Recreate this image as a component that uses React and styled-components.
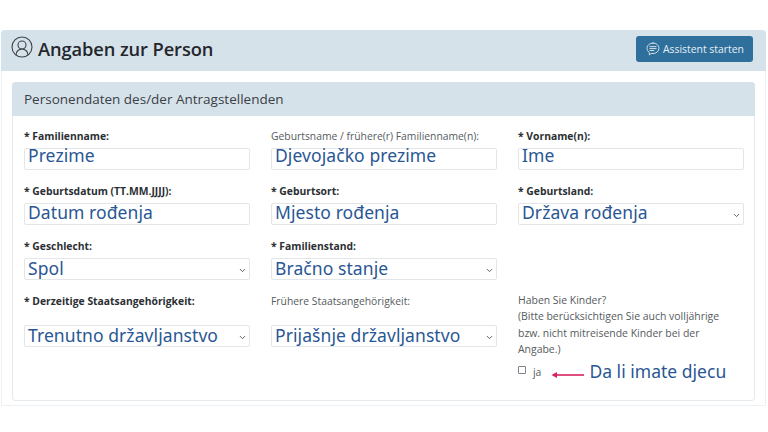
import React from 'react'
import styled, { createGlobalStyle } from 'styled-components'
import { CircleUserRound, ChevronDown } from 'lucide-react'

const GlobalStyle = createGlobalStyle`
    html, body {
        margin: 0;
        padding: 0;
        background: #fff;
    }
    body {
        font-family: 'Open Sans', 'Liberation Sans', sans-serif;
        color: #212529;
    }
`

const Page = styled.div`
    width: 768px;
    height: 432px;
    padding: 30px 1px 0;
    box-sizing: border-box;
    overflow: hidden;
`
const Panel = styled.section`
    width: 765px;
    height: 376px;
    box-sizing: border-box;
    border: 1px solid #eef1f4;
    border-top: 0;
    border-radius: 4px 4px 0 0;
`
const PanelHead = styled.header`
    height: 41px;
    box-sizing: border-box;
    margin: 0 -1px;
    padding: 6px 13px 0 11px;
    background: #d6e2ea;
    border-radius: 4px 4px 0 0;
    display: flex;
    justify-content: space-between;
    align-items: flex-start;
`
const Title = styled.h1`
    margin: 0;
    display: flex;
    align-items: flex-start;
    gap: 4px;
    font-size: 18.3px;
    letter-spacing: -0.1px;
    line-height: 26px;
    font-weight: 600;
    color: #23272b;
    svg {
        margin: -1px 0 0 -2px;
        color: #3c4247;
    }
`
const StartButton = styled.button`
    width: 117px;
    height: 26px;
    padding: 0 0 0 10px;
    border: 0;
    border-radius: 3px;
    background: #2f6f9b;
    color: #e6eff5;
    font-family: inherit;
    font-size: 10.4px;
    display: flex;
    align-items: center;
    gap: 3px;
`
const InnerCard = styled.div`
    margin: 11px 10px 0 10px;
    height: 319px;
    box-sizing: border-box;
    border: 1px solid #e6e9ec;
    border-top: 0;
    border-radius: 4px;
`
const InnerHead = styled.h2`
    margin: 0 -1px;
    height: 34px;
    box-sizing: border-box;
    padding: 0 12px;
    background: #d6e2ea;
    border-radius: 4px 4px 0 0;
    font-size: 13.5px;
    font-weight: 400;
    line-height: 35px;
    color: #3a4046;
`
const FormGrid = styled.div`
    display: grid;
    grid-template-columns: repeat(3, 226px);
    column-gap: 21px;
    row-gap: 13px;
    padding: 12px 11px 0;
`
const Field = styled.div`
    display: flex;
    flex-direction: column;
`
const Label = styled.label`
    font-size: 10.35px;
    line-height: 16px;
    height: ${p => (p.$tall ? '32px' : '20px')};
    font-weight: ${p => (p.$required ? 700 : 400)};
    color: ${p => (p.$required ? '#2b2f33' : '#555b60')};
`
const Control = styled.div`
    height: 22px;
    box-sizing: border-box;
    border: 1px solid #e3e6e9;
    border-radius: 2px;
    padding: 0 3px ${p => (p.$lift || 0) + 2}px;
    display: flex;
    align-items: center;
    justify-content: space-between;
    font-family: 'Noto Sans', 'Inter', sans-serif;
    font-size: 17.5px;
    letter-spacing: 0.08px;
    line-height: 20px;
    color: #2a5794;
    background: #fff;
    svg {
        color: #50565b;
        margin: ${p => (p.$lift || 0) + 4}px -1px 0 0;
        flex: none;
    }
`
const Note = styled.div`
    font-size: 10.45px;
    line-height: 16.4px;
    margin-top: -1px;
    color: #555b60;
`
const AnswerRow = styled.div`
    display: flex;
    align-items: center;
    margin-top: 3px;
    height: 24px;
`
const Box = styled.span`
    width: 6px;
    height: 6px;
    border: 1px solid #7d8388;
    border-radius: 1px;
    margin-bottom: 5px;
`
const BoxText = styled.span`
    font-size: 10.4px;
    margin: 0 0 2px 7px;
    color: #555b60;
`
const Arrow = styled.svg`
    margin: 4px 0 0 10px;
    flex: none;
    width: 34px;
    height: 8px;
`
const Hint = styled.span`
    margin: -4px 0 0 4px;
    font-family: 'Noto Sans', 'Inter', sans-serif;
    font-size: 17.5px;
    letter-spacing: 0.02px;
    color: #2a5794;
`

const ChatIcon = () => (
    <svg width="14" height="14" viewBox="0 0 16 16" fill="none" stroke="currentColor" strokeWidth="1" strokeLinecap="round">
        <path d="M8 1.2c3.8 0 6.8 2.7 6.8 6S11.8 13.2 8 13.2c-.8 0-1.5-.1-2.2-.3L3.900 15l-.2-3.100C2.100 10.800 1.200 9.100 1.200 7.200c0-3.300 3-6 6.800-6z" />
        <path d="M4.500 5.300h7M4.500 7.500h7M4.500 9.700h4.500" />
    </svg>
)

const Select = ({ children, lift }) => (
    <Control $lift={lift}>
        {children}
        <ChevronDown size={9} strokeWidth={2.5} />
    </Control>
)

const App = () => {
    return (
        <Page>
            <GlobalStyle />
            <Panel>
                <PanelHead>
                    <Title>
                        <CircleUserRound size={24} strokeWidth={1.1} />
                        Angaben zur Person
                    </Title>
                    <StartButton type="button">
                        <ChatIcon />
                        Assistent starten
                    </StartButton>
                </PanelHead>
                <InnerCard>
                    <InnerHead>Personendaten des/der Antragstellenden</InnerHead>
                    <FormGrid>
                        <Field>
                            <Label $required>* Familienname:</Label>
                            <Control $lift={6}>Prezime</Control>
                        </Field>
                        <Field>
                            <Label>Geburtsname / frühere(r) Familienname(n):</Label>
                            <Control $lift={6}>Djevojačko prezime</Control>
                        </Field>
                        <Field>
                            <Label $required>* Vorname(n):</Label>
                            <Control $lift={6}>Ime</Control>
                        </Field>
                        <Field>
                            <Label $required>* Geburtsdatum (TT.MM.JJJJ):</Label>
                            <Control $lift={3}>Datum rođenja</Control>
                        </Field>
                        <Field>
                            <Label $required>* Geburtsort:</Label>
                            <Control $lift={3}>Mjesto rođenja</Control>
                        </Field>
                        <Field>
                            <Label $required>* Geburtsland:</Label>
                            <Select lift={3}>Država rođenja</Select>
                        </Field>
                        <Field>
                            <Label $required>* Geschlecht:</Label>
                            <Select>Spol</Select>
                        </Field>
                        <Field>
                            <Label $required>* Familienstand:</Label>
                            <Select>Bračno stanje</Select>
                        </Field>
                        <Field />
                        <Field>
                            <Label $required $tall>* Derzeitige Staatsangehörigkeit:</Label>
                            <Select>Trenutno državljanstvo</Select>
                        </Field>
                        <Field>
                            <Label $tall>Frühere Staatsangehörigkeit:</Label>
                            <Select>Prijašnje državljanstvo</Select>
                        </Field>
                        <Field>
                            <Note>
                                Haben Sie Kinder?<br />
                                (Bitte berücksichtigen Sie auch volljährige<br />
                                bzw. nicht mitreisende Kinder bei der<br />
                                Angabe.)
                            </Note>
                            <AnswerRow>
                                <Box />
                                <BoxText>ja</BoxText>
                                <Arrow viewBox="0 0 34 8">
                                    <path d="M4 4h29" stroke="#d6245f" strokeWidth="1.6" />
                                    <path d="M0.500 4 6 1v6z" fill="#d6245f" />
                                </Arrow>
                                <Hint>Da li imate djecu</Hint>
                            </AnswerRow>
                        </Field>
                    </FormGrid>
                </InnerCard>
            </Panel>
        </Page>
    )
}

export default App
